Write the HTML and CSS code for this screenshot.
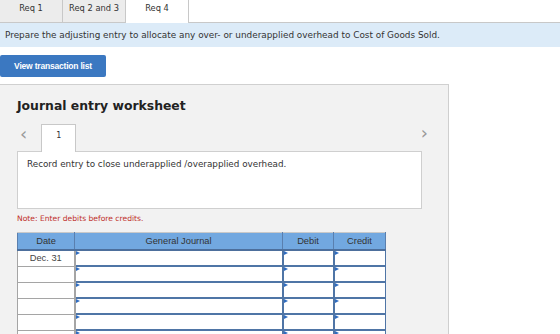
FILE: index.html
```html
<!DOCTYPE html>
<html lang="en">
<head>
    <meta charset="UTF-8">
    <title>Req 4</title>
    <link rel="stylesheet" href="styles.css">
</head>
<body>
    <div class="tabs">
        <div class="tab">Req 1</div>
        <div class="tab">Req 2 and 3</div>
        <div class="tab active">Req 4</div>
    </div>
    <div class="banner">Prepare the adjusting entry to allocate any over- or underapplied overhead to Cost of Goods Sold.</div>

    <button class="view-btn">View transaction list</button>

    <div class="panel">
        <h2>Journal entry worksheet</h2>
        <div class="pager">
            <span class="arrow">&lsaquo;</span>
            <div class="page-tab">1</div>
            <span class="arrow next">&rsaquo;</span>
        </div>
        <div class="entry-box">Record entry to close underapplied /overapplied overhead.</div>
        <p class="note">Note: Enter debits before credits.</p>

        <table class="journal">
            <thead>
                <tr>
                    <th class="col-date">Date</th>
                    <th class="col-account">General Journal</th>
                    <th class="col-debit">Debit</th>
                    <th class="col-credit">Credit</th>
                </tr>
            </thead>
            <tbody>
                <tr><td class="date">Dec. 31</td><td class="input"></td><td class="input"></td><td class="input"></td></tr>
                <tr><td class="date"></td><td class="input"></td><td class="input"></td><td class="input"></td></tr>
                <tr><td class="date"></td><td class="input"></td><td class="input"></td><td class="input"></td></tr>
                <tr><td class="date"></td><td class="input"></td><td class="input"></td><td class="input"></td></tr>
                <tr><td class="date"></td><td class="input"></td><td class="input"></td><td class="input"></td></tr>
                <tr><td class="date"></td><td class="input"></td><td class="input"></td><td class="input"></td></tr>
            </tbody>
        </table>
    </div>
</body>
</html>
```

FILE: styles.css
```css
/* General */
body {
    margin: 0;
    font-family: 'DejaVu Sans', Verdana, sans-serif;
    color: #333;
    background: #fff;
    overflow: hidden;
}

/* Tabs */
.tabs {
    display: flex;
    height: 22px;
    border-bottom: 1px solid #c8c8c8;
}

.tab {
    width: 62px;
    text-align: center;
    font-size: 8.3px;
    line-height: 16px;
    background: #ececec;
    border-right: 1px solid #c8c8c8;
    color: #333;
}

.tab.active {
    background: #fff;
    height: 23px;
    position: relative;
}

/* Instruction banner */
.banner {
    background: #dcebf8;
    height: 24px;
    line-height: 24px;
    padding-left: 5px;
    font-size: 8.9px;
    color: #333;
}

.view-btn {
    display: block;
    margin-top: 8px;
    width: 106px;
    height: 22px;
    border: none;
    border-radius: 2px;
    background: #3b78c1;
    color: #fff;
    font-family: 'Liberation Sans', Arial, sans-serif;
    font-weight: bold;
    font-size: 8.5px;
    letter-spacing: -0.2px;
    padding: 0;
}

/* Worksheet panel */
.panel {
    margin-top: 7px;
    width: 431px;
    height: 260px;
    padding: 0 0 0 17px;
    background: #f2f2f2;
    border-top: 1px solid #d0d0d0;
    border-right: 1px solid #cfcfcf;
}

.panel h2 {
    margin: 0;
    padding-top: 13px;
    font-size: 12.4px;
    font-weight: bold;
    color: #222;
    height: 25px;
}

.pager {
    display: flex;
    align-items: flex-end;
    height: 28px;
    width: 408px;
    position: relative;
}

.arrow {
    color: #999;
    font-size: 18px;
    line-height: 18px;
    margin: 0 14px 8px 3px;
}

.arrow.next {
    position: absolute;
    right: -3px;
    top: 1px;
    margin: 0;
}

.page-tab {
    width: 33px;
    height: 27px;
    background: #fff;
    border: 1px solid #c8c8c8;
    border-bottom: none;
    text-align: center;
    font-size: 8px;
    line-height: 22px;
    color: #333;
    position: relative;
    top: 1px;
}

.entry-box {
    width: 394px;
    height: 46px;
    box-sizing: content-box;
    background: #fff;
    border: 1px solid #cfcfcf;
    padding: 7px 0 3px 9px;
    font-size: 8.8px;
    color: #333;
}

.note {
    margin: 5px 0 0;
    font-size: 7.6px;
    color: #c0302b;
    height: 18px;
}

/* Journal table */
.journal {
    border-collapse: collapse;
    table-layout: fixed;
    width: 366px;
    font-family: 'Liberation Sans', Arial, sans-serif;
    font-size: 9.3px;
}

.journal th {
    background: #72a8e0;
    color: #333;
    font-weight: normal;
    height: 16px;
    padding: 0;
    border: 1px solid #5a7fae;
    border-top-color: #c9c9c9;
    border-bottom: 2px solid #4d6f9c;
}

.col-date { width: 56px; }
.col-account { width: 207px; }
.col-debit { width: 50px; }
.col-credit { width: 51px; }

.journal td {
    height: 14px;
    padding: 0;
    background: #fff;
}

.journal td.date {
    text-align: center;
    color: #444;
    border: 1px solid #a5a5a5;
    border-right: 2px solid #a5a5a5;
}

.journal td.input {
    position: relative;
    border-left: 2px solid #4f75a6;
    border-right: 1px solid #4f75a6;
    border-bottom: 2px solid #4f75a6;
    border-top: 1px solid #4f75a6;
}

.journal td.input::before {
    content: "";
    position: absolute;
    left: 0;
    top: 0;
    border-left: 4px solid #2f6cc0;
    border-top: 2px solid transparent;
    border-bottom: 2px solid transparent;
}
```
